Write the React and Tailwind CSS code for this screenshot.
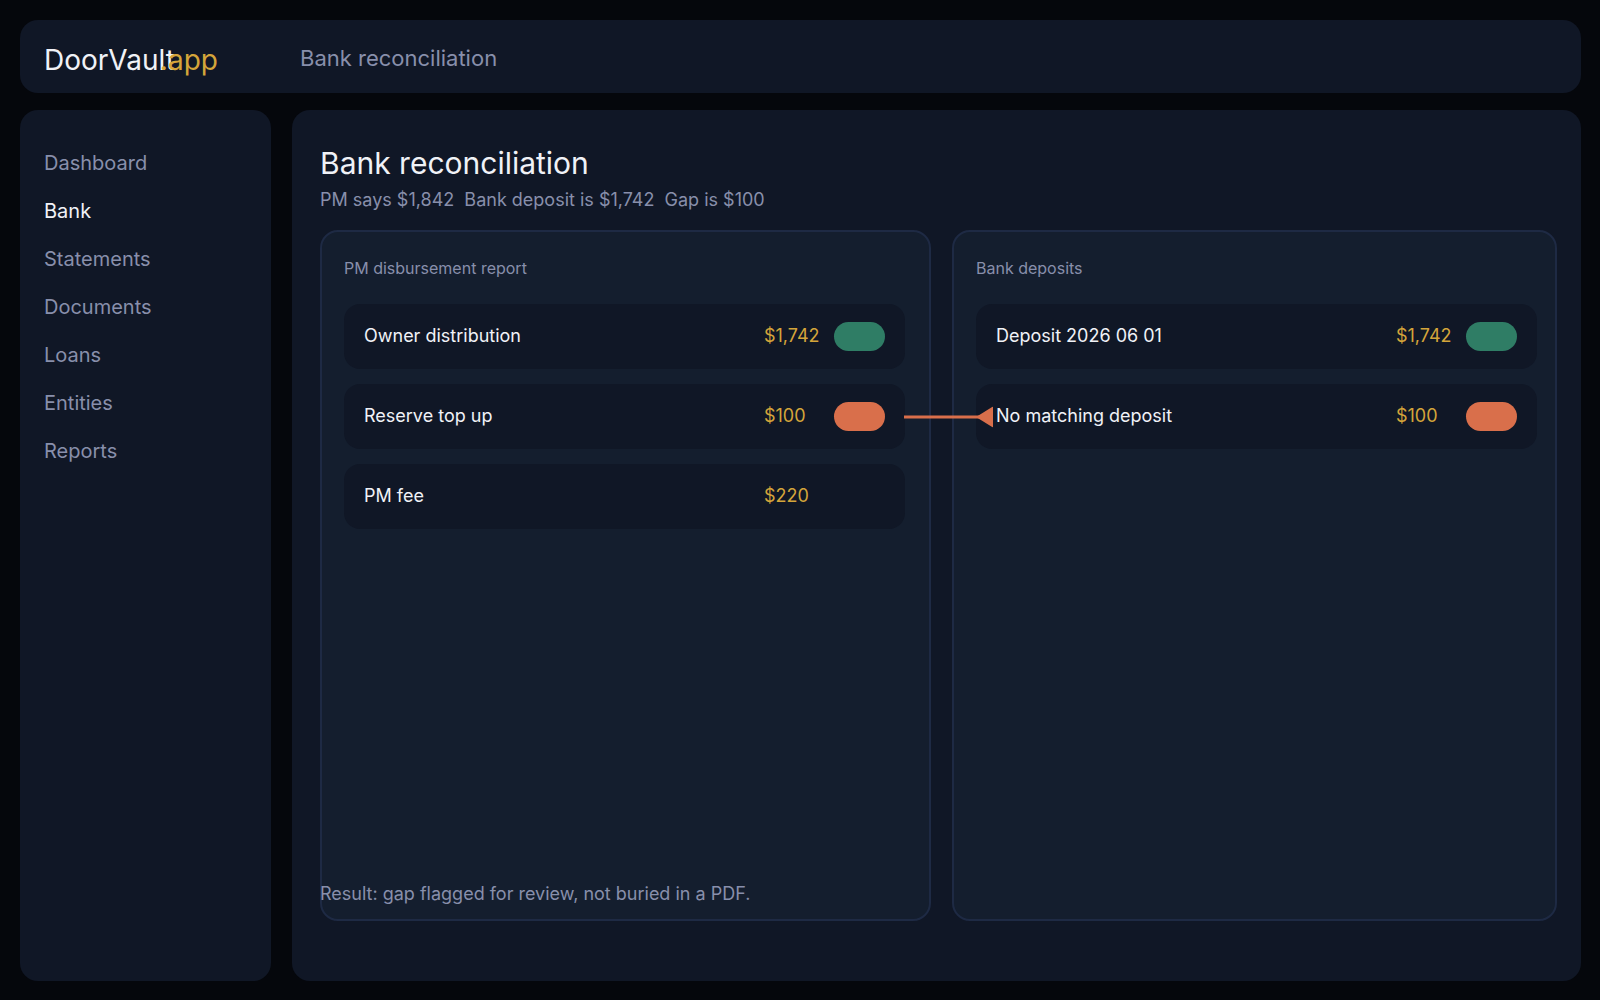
import React from 'react';

const navItems = [
  { label: 'Dashboard', href: '#dashboard' },
  { label: 'Bank', href: '#bank', active: true },
  { label: 'Statements', href: '#statements' },
  { label: 'Documents', href: '#documents' },
  { label: 'Loans', href: '#loans' },
  { label: 'Entities', href: '#entities' },
  { label: 'Reports', href: '#reports' },
];

const disbursements = [
  { label: 'Owner distribution', amount: '$1,742', status: 'matched' },
  { label: 'Reserve top up', amount: '$100', status: 'gap', linked: true },
  { label: 'PM fee', amount: '$220' },
];

const deposits = [
  { label: 'Deposit 2026 06 01', amount: '$1,742', status: 'matched' },
  { label: 'No matching deposit', amount: '$100', status: 'gap' },
];

const statusColors = {
  matched: 'bg-[#2f7d65]',
  gap: 'bg-[#d96f4b]',
};

// Joins an unmatched row to its counterpart in the next panel
const GapArrow = () => (
  <svg
    className="absolute left-full top-1/2 z-10 -ml-px -translate-y-1/2"
    width="89"
    height="21"
    viewBox="0 0 89 21"
    fill="#d96f4b"
    aria-hidden="true"
  >
    <rect x="0" y="9" width="76" height="3" />
    <path d="M72 10.5 89 0V21Z" />
  </svg>
);

const Row = ({ label, amount, status, linked }) => (
  <li className="relative flex h-[65px] items-center rounded-2xl bg-[#101726] px-5 text-lg leading-6">
    <span className="flex-1 pb-0.5 text-[#f0f2f7]">{label}</span>
    <span className="w-[70px] pb-0.5 text-[#d4a53a]">{amount}</span>
    <span className={`h-[29px] w-[51px] rounded-full ${status ? statusColors[status] : ''}`}></span>
    {linked && <GapArrow />}
  </li>
);

const Panel = ({ title, rows, className }) => (
  <section className={`rounded-[18px] border-2 border-[#1e2a44] bg-[#141e2e] pt-6 pl-[22px] ${className}`}>
    <h2 className="text-base leading-6 text-[#888fab]">{title}</h2>
    <ul className="mt-6 space-y-[15px]">
      {rows.map((row) => (
        <Row key={row.label} {...row} />
      ))}
    </ul>
  </section>
);

const App = () => {
  return (
    <div className="flex min-h-screen flex-col gap-[17px] bg-[#05070c] pt-5 pr-[19px] pb-[19px] pl-5 font-['Inter',sans-serif]">
      {/* Top Bar */}
      <header className="flex items-start rounded-[18px] bg-[#101726] px-6 pt-[22px] pb-[15px]">
        <div className="w-64 text-[28px] leading-9 text-[#f0f2f7]">
          DoorVault<span className="-ml-[15px] text-[#d4a53a]">.app</span>
        </div>
        <p className="text-[22px] leading-8 text-[#888fab]">Bank reconciliation</p>
      </header>

      <div className="flex flex-1 gap-[21px]">
        {/* Sidebar */}
        <nav className="w-[251px] shrink-0 rounded-[18px] bg-[#101726] px-6 pt-[41px]">
          <ul className="space-y-6">
            {navItems.map((item) => (
              <li key={item.label} className="text-xl leading-6">
                <a href={item.href} className={item.active ? 'text-[#f0f2f7]' : 'text-[#888fab]'}>
                  {item.label}
                </a>
              </li>
            ))}
          </ul>
        </nav>

        {/* Main Content */}
        <main className="flex flex-1 flex-col rounded-[18px] bg-[#101726] pt-[33px] pr-6 pb-[75px] pl-7">
          <h1 className="text-3xl leading-10 text-[#f0f2f7]">Bank reconciliation</h1>
          <p className="mt-[5px] text-lg leading-6 whitespace-pre-wrap text-[#888fab]">
            {'PM says $1,842  Bank deposit is $1,742  Gap is $100'}
          </p>

          <div className="mt-[18px] grid flex-1 grid-cols-[611fr_605fr] gap-[21px]">
            <Panel title="PM disbursement report" rows={disbursements} className="pr-6" />
            <Panel title="Bank deposits" rows={deposits} className="pr-[18px]" />
          </div>

          <p className="-mt-[39px] text-lg leading-6 text-[#888fab]">
            Result: gap flagged for review, not buried in a PDF.
          </p>
        </main>
      </div>
    </div>
  );
};

export default App;
